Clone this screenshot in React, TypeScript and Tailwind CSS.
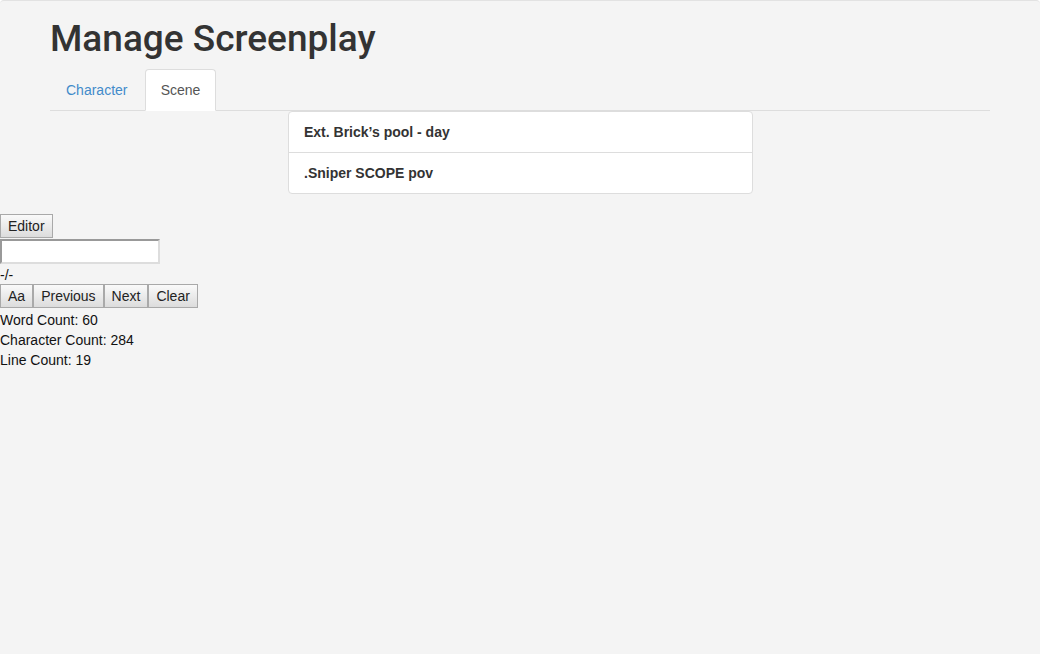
export default function App() {
  const btn =
    'h-[24px] px-[7px] text-[14px] leading-none text-[#222] border border-[#a9a9a9] bg-gradient-to-b from-[#fafafa] to-[#dcdcdc]'

  return (
    <div className="min-h-[654px] bg-[#f4f4f4] font-['Liberation_Sans',Arial,sans-serif] text-[#333] border-t border-[#e2e2e2] rounded-t-[4px]">
      <div className="w-[940px] mx-auto">
        <h1 className="pt-[18px] pb-[10px] text-[37px] leading-[40px] font-medium text-[#333] font-['Roboto',sans-serif]">Manage Screenplay</h1>
        <ul className="flex border-b border-[#ddd] text-[14px]">
          <li className="-mb-px">
            <a className="block w-[95px] pl-[15px] h-[41px] leading-[41px] text-[#428bca] border border-transparent">Character</a>
          </li>
          <li className="-mb-px">
            <a className="block w-[71px] text-center h-[42px] leading-[41px] text-[#555] bg-white border border-[#ddd] border-b-white rounded-t-[4px]">Scene</a>
          </li>
        </ul>
      </div>
      <div className="w-[465px] ml-[288px] bg-white border border-[#ddd] rounded-[4px] text-[14px] font-bold text-[#333]">
        <div className="h-[41px] leading-[40px] px-[15px] border-b border-[#ddd]">Ext. Brick’s pool - day</div>
        <div className="h-[40px] leading-[40px] px-[15px]">.Sniper SCOPE pov</div>
      </div>
      <div className="mt-[20px] text-[14px] text-[#111]">
        <button className={btn}>Editor</button>
        <div className="mt-px">
          <input className="w-[160px] h-[25px] bg-white border-2 border-t-[#999] border-l-[#999] border-r-[#ddd] border-b-[#ddd] outline-none" />
        </div>
        <div className="h-[20px] leading-[22px]">-/-</div>
        <div className="flex">
          <button className={btn}>Aa</button>
          <button className={btn}>Previous</button>
          <button className={btn}>Next</button>
          <button className={btn}>Clear</button>
        </div>
        <div className="mt-[2px] leading-[20px]">Word Count: 60</div>
        <div className="leading-[20px]">Character Count: 284</div>
        <div className="leading-[20px]">Line Count: 19</div>
      </div>
    </div>
  )
}
